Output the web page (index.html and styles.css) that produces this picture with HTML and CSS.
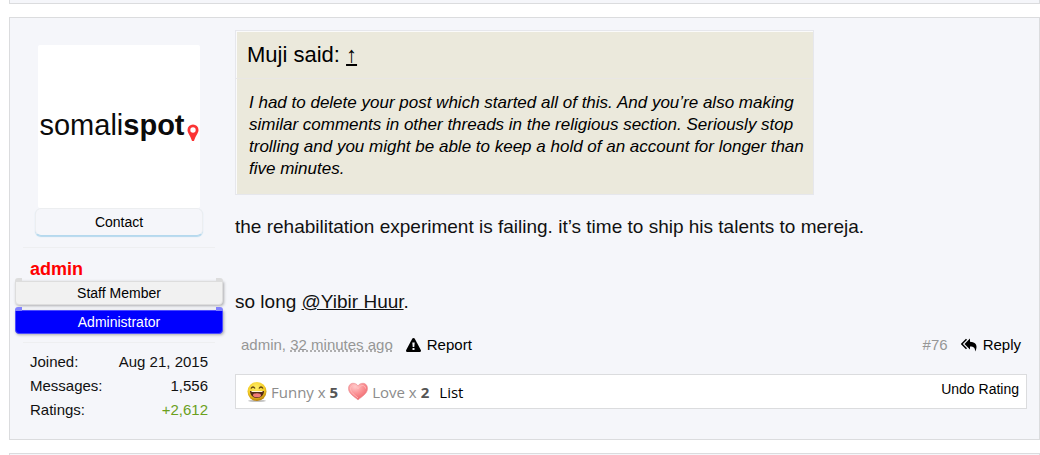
FILE: index.html
```html
<!DOCTYPE html>
<html lang="en">

<head>
    <meta charset="UTF-8">
    <meta name="viewport" content="width=device-width, initial-scale=1.0">
    <title>Somalispot thread</title>
    <link rel="stylesheet" href="styles.css">
</head>

<body>
    <div class="post post-previous"></div>

    <article class="post">
        <!-- User info -->
        <aside class="user">
            <div class="avatar">
                <span>somali<b>spot</b></span>
                <svg class="pin" viewBox="0 0 12 18" width="12" height="18" aria-hidden="true">
                    <path d="M6 .5a5.500 5.500 0 0 0-5.500 5.500C.5 9 3.500 12 5 17h2c1.500-5 4.500-8 4.500-11A5.500 5.500 0 0 0 6 .5z" fill="#fb3434" />
                    <circle cx="6" cy="6" r="2.700" fill="#fff" />
                </svg>
            </div>
            <button class="contact" type="button">Contact</button>
            <div class="user-name">
                <a href="#admin">admin</a>
            </div>
            <div class="banner banner-staff">Staff Member</div>
            <div class="banner banner-admin">Administrator</div>
            <dl class="stats">
                <div><dt>Joined:</dt><dd>Aug 21, 2015</dd></div>
                <div><dt>Messages:</dt><dd>1,556</dd></div>
                <div><dt>Ratings:</dt><dd class="positive">+2,612</dd></div>
            </dl>
        </aside>

        <!-- Message -->
        <div class="message">
            <blockquote class="quote">
                <div class="quote-author">Muji said: <a href="#quoted">↑</a></div>
                <p class="quote-text">I had to delete your post which started all of this. And you’re also making similar comments in other threads in the religious section. Seriously stop trolling and you might be able to keep a hold of an account for longer than five minutes.</p>
            </blockquote>
            <div class="text">
                the rehabilitation experiment is failing. it’s time to ship his talents to mereja.<br><br><br>
                so long <a href="#yibir-huur">@Yibir Huur</a>.
            </div>

            <div class="meta">
                <span class="muted"><a href="#admin">admin</a>, <abbr>32 minutes ago</abbr></span>
                <a class="control" href="#report">
                    <svg viewBox="0 0 15 14" width="15" height="14" aria-hidden="true">
                        <path d="M7.500 0c.6 0 1 .3 1.300.8l6 11.200c.5 1 0 2-1.100 2H1.300C.2 14-.3 13 .2 12l6-11.200C6.500.3 6.900 0 7.500 0z" />
                        <path d="M6.300 4.500h2.400l-.4 4.500H6.700zM6.500 10h2v2h-2z" fill="#f5f6fa" />
                    </svg>
                    Report
                </a>
                <a class="number" href="#post-76">#76</a>
                <a class="control" href="#reply">
                    <svg viewBox="0 0 16 14" width="16" height="14" aria-hidden="true">
                        <path d="M9 .5v3.200c4.500.2 6.500 2.200 6.500 5 0 1.800-.6 3.700-1.500 4.800.3-3.500-1-5-5-5.100v3.100L3.500 6z" />
                        <path d="M5.500 1.200L.8 6l4.700 4.800" fill="none" stroke="#000" stroke-width="1.500" />
                    </svg>
                    Reply
                </a>
            </div>

            <div class="ratings">
                <span class="rating">
                    <svg viewBox="0 0 20 20" width="20" height="20" aria-hidden="true">
                        <defs>
                            <radialGradient id="face" cx=".45" cy=".3" r=".7">
                                <stop offset="0" stop-color="#fff06a" />
                                <stop offset=".65" stop-color="#f3cb25" />
                                <stop offset="1" stop-color="#b77b08" />
                            </radialGradient>
                        </defs>
                        <ellipse cx="10" cy="18.800" rx="9" ry="1.200" fill="#aaa" opacity=".7" />
                        <circle cx="10" cy="9.500" r="9.500" fill="url(#face)" />
                        <path d="M4 6.500Q6 3.500 8 6.500M12 6.500Q14 3.500 16 6.500" fill="none" stroke="#604010" stroke-width="1.300" />
                        <path d="M3 9h14c0 4-3 7-7 7s-7-3-7-7z" fill="#542b18" />
                        <path d="M4.500 9h11v1h-11z" fill="#fff5d8" />
                        <ellipse cx="10" cy="13.300" rx="4" ry="2" fill="#f07b78" />
                    </svg>
                    Funny x <b>5</b>
                </span>
                <span class="rating">
                    <svg viewBox="0 0 20 20" width="20" height="20" aria-hidden="true">
                        <defs>
                            <radialGradient id="heart" cx=".35" cy=".2" r=".8">
                                <stop offset="0" stop-color="#ffcaca" />
                                <stop offset=".5" stop-color="#fb9497" />
                                <stop offset="1" stop-color="#ee686e" />
                            </radialGradient>
                        </defs>
                        <path d="M10 18C7 15 .5 12 .5 6.500.5 0 8 0 10 4c2-4 9.500-4 9.500 2.500C19.500 12 13 15 10 18z" fill="url(#heart)" stroke="#e98c91" stroke-width=".6" />
                        <path d="M10 16c-3-3-7.500-5-7.500-9.500 0-4 5.500-4 7.500.5 2-4.500 7.500-4.500 7.500-.5" fill="none" stroke="#ffc0c0" stroke-width=".8" />
                    </svg>
                    Love x <b>2</b>
                </span>
                <a class="list" href="#ratings">List</a>
                <a class="undo" href="#undo">Undo Rating</a>
            </div>
        </div>
    </article>

    <div class="post post-next"></div>
</body>

</html>
```
FILE: styles.css
```css
* {
    box-sizing: border-box;
}

body {
    margin: 0 0 0 9px;
    background: #fff;
    color: #111;
    font-family: "Liberation Sans", Arial, sans-serif;
    font-size: 15px;
}

a {
    color: inherit;
    text-decoration: none;
}

svg {
    flex: none;
}

.post {
    display: flex;
    gap: 12px;
    margin-bottom: 13px;
    padding: 12px 12px 17px 5px;
    background: #f5f6fa;
    border: 1px solid #dbdcde;
}

.post-previous {
    padding: 3px 0 0;
    border-top: 0;
}

.post-next {
    margin: 0;
    padding: 1px 0 0;
    border-bottom: 0;
}

.user {
    flex: 0 0 208px;
    padding-top: 15px;
}

.avatar {
    display: flex;
    align-items: center;
    justify-content: center;
    width: 162px;
    height: 163px;
    margin-left: 23px;
    padding-bottom: 2px;
    background: #fff;
    border-radius: 2px;
    color: #0b0b0b;
    font-size: 29px;
}

.pin {
    margin: 15px 0 0 2px;
}

.contact {
    display: block;
    width: 168px;
    height: 28px;
    margin: 0 0 11px 20px;
    background: #f5f6fa;
    border: 1px solid #eceef0;
    border-bottom-color: #b5d9ee;
    border-radius: 6px;
    box-shadow: 0 1px 1px #b5d9ee;
    color: #000;
    font: 14px "Liberation Sans", Arial, sans-serif;
}

.user-name {
    margin: 0 8px;
    padding: 9px 7px 0;
    border-top: 1px solid #eeeff1;
    color: #f00;
    font-size: 18px;
    font-weight: bold;
    line-height: 24px;
}

.banner {
    position: relative;
    height: 24px;
    margin-bottom: 5px;
    border: 1px solid #ddd;
    border-radius: 0 0 4px 4px;
    box-shadow: 1px 1px 3px rgba(0, 0, 0, 0.3);
    font-size: 14px;
    line-height: 22px;
    text-align: center;
}

.banner::before,
.banner::after {
    content: "";
    position: absolute;
    top: -4px;
    width: 7px;
    height: 4px;
    background: #ddd;
}

.banner::before {
    left: -1px;
    border-top-left-radius: 3px;
}

.banner::after {
    right: -1px;
    border-top-right-radius: 3px;
}

.banner-staff {
    background: #f1f1f1;
    color: #000;
}

.banner-admin {
    background: #00f;
    border-color: #4a4aff;
    color: #fff;
}

.banner-admin::before,
.banner-admin::after {
    background: #8080ff;
}

.stats {
    margin: 8px 8px 0;
    padding: 7px 7px 0;
    border-top: 1px solid #eeeff1;
    line-height: 24px;
}

.stats div {
    display: flex;
    justify-content: space-between;
}

.stats dd {
    margin: 0;
}

.stats .positive {
    color: #6ba01c;
}

.message {
    flex: 1;
    min-width: 0;
}

.quote {
    max-width: 579px;
    margin: 0 0 19px;
    background: #ebe9dc;
    border: 1px solid #e6e7ec;
    box-shadow: inset 1px 1px 0 #fafafa;
    color: #000;
}

.quote-author {
    padding: 11px 11px 10px;
    border-bottom: 1px solid #e9e7e5;
    font-size: 22px;
    line-height: 26px;
}

.quote-author a {
    text-decoration: underline;
}

.quote-text {
    margin: 0;
    padding: 13px 5px 14px 13px;
    font-size: 17px;
    font-style: italic;
    line-height: 22px;
}

.text {
    font-size: 19px;
    line-height: 25px;
}

.text a {
    text-decoration: underline;
}

.meta {
    display: flex;
    align-items: center;
    gap: 13px;
    margin: 21px 6px 19px;
    line-height: 20px;
}

.muted,
.number {
    color: #969696;
}

.muted abbr {
    text-decoration: underline dotted;
}

.control {
    display: flex;
    align-items: center;
    gap: 6px;
    color: #000;
}

.number {
    margin-left: auto;
}

.ratings {
    display: flex;
    align-items: center;
    gap: 10px;
    height: 35px;
    padding: 0 7px 0 11px;
    background: #fff;
    border: 1px solid #dbdcde;
    color: #8c8c8c;
    font-family: "Open Sans", sans-serif;
    font-size: 15px;
}

.rating {
    display: flex;
    align-items: center;
    gap: 4px;
}

.rating b {
    color: #555;
}

.list {
    color: #000;
}

.undo {
    margin-left: auto;
    padding-bottom: 6px;
    color: #000;
    font-family: "Liberation Sans", Arial, sans-serif;
    font-size: 14px;
}
```
